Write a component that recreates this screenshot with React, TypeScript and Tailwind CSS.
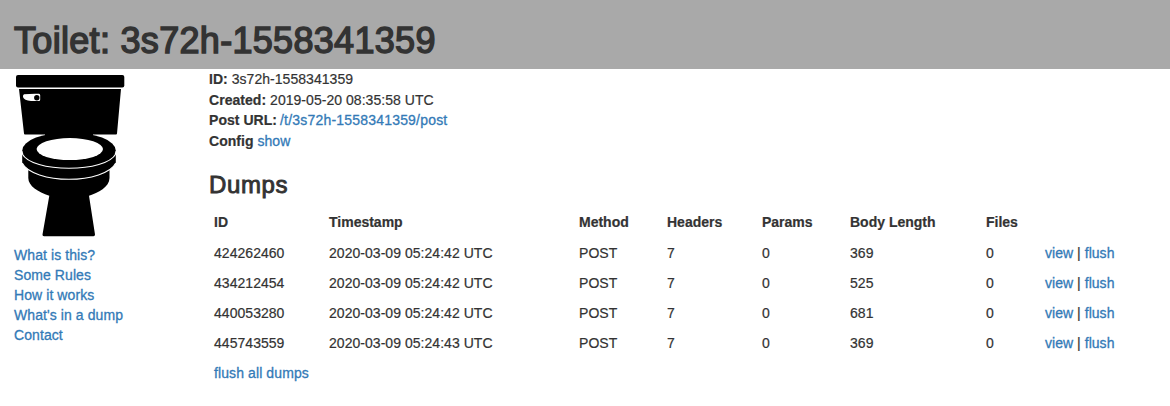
const rows = [
  ["424262460", "2020-03-09 05:24:42 UTC", "POST", "7", "0", "369", "0"],
  ["434212454", "2020-03-09 05:24:42 UTC", "POST", "7", "0", "525", "0"],
  ["440053280", "2020-03-09 05:24:42 UTC", "POST", "7", "0", "681", "0"],
  ["445743559", "2020-03-09 05:24:43 UTC", "POST", "7", "0", "369", "0"],
];
const heads = ["ID", "Timestamp", "Method", "Headers", "Params", "Body Length", "Files"];
const links = ["What is this?", "Some Rules", "How it works", "What's in a dump", "Contact"];
const grid = "grid grid-cols-[115px_250px_88px_95px_88px_136px_59px_120px] pl-[5px]";
const link = "text-[#337ab7] [-webkit-text-stroke:0.3px_#337ab7]";

function Toilet() {
  return (
    <svg width="112" height="164" viewBox="14 74 112 164" className="block">
      {/* lid and tank */}
      <rect x="16" y="75" width="108.3" height="12.4" rx="2" />
      <path d="M19 89H121L117 133.5Q117 134.4 116 134.4H25Q24 134.4 24 133.5Z" />
      <path d="M45 134H93V142H45Z" />
      {/* flush handle */}
      <path d="M24 94.2L35 93.8H39Q40.2 94 40.2 95.5V99.5Q40.2 101 39 101H31Q24 100.5 23 97Q22.8 94.8 24 94.2Z" fill="white" />
      <circle cx="36.8" cy="97.7" r="2.7" />
      {/* base and bowl */}
      <path d="M28.3 168H109.5V178C109.5 187 98 193 89 195.7L95 234.5Q95 236.2 93.5 236.2H44Q42.3 236.2 42.5 234.5L49.3 195.7C38 192 28.3 186 28.3 178Z" />
      {/* lower rim */}
      <path d="M22.2 154V163C27 173 48 179.3 69 179.3S111 173 115.8 163V154Z" />
      <path d="M22.2 163C27 173 48 179.3 69 179.3S111 173 115.8 163" fill="none" stroke="white" strokeWidth="1.1" />
      {/* seat */}
      <ellipse cx="69" cy="150.3" rx="46.7" ry="18" />
      <path d="M22.3 154C27 163 47 168.3 69 168.3S111 163 115.7 154" fill="none" stroke="white" strokeWidth="1.1" />
      <ellipse cx="69.8" cy="149.1" rx="33.2" ry="11" fill="white" />
    </svg>
  );
}

export default function App() {
  return (
    <div className="h-[406px] overflow-hidden bg-white font-['Liberation_Sans',Arial,sans-serif] text-sm leading-5 tracking-[0.04px] text-[#333] [-webkit-text-stroke:0.2px_#333]">
      <header className="h-[69px] bg-[#a9a9a9] pl-[14px] pt-[21px]">
        <h1 className="text-[36px] font-normal leading-10 tracking-[0.31px] [-webkit-text-stroke:1.5px_#333]">Toilet: 3s72h-1558341359</h1>
      </header>
      <div className="flex">
        <nav className="w-[209px] pl-[14px] pt-[5px]">
          <Toilet />
          <ul className="pt-[7px] tracking-[0.08px]">{links.map((l) => <li key={l}><a className={link}>{l}</a></li>)}</ul>
        </nav>
        <main>
          <div className="leading-[20.7px]">
            <p><b>ID:</b> 3s72h-1558341359</p>
            <p><b>Created:</b> 2019-05-20 08:35:58 UTC</p>
            <p><b>Post URL:</b> <a className={link + " -ml-px tracking-[0.2px]"}>/t/3s72h-1558341359/post</a></p>
            <p><b>Config</b> <a className={link}>show</a></p>
          </div>
          <h2 className="mt-5 text-2xl leading-[26px] tracking-[0.6px] [-webkit-text-stroke:0.9px_#333]">Dumps</h2>
          <div className="pt-[9px] leading-[30px]">
            <div className={grid + " mb-px tracking-normal"}>{heads.map((h) => <b key={h}>{h}</b>)}</div>
            {rows.map((r) => (
              <div key={r[0]} className={grid}>
                {r.map((c, i) => <span key={i}>{c}</span>)}
                <span><a className={link}>view</a> | <a className={link}>flush</a></span>
              </div>
            ))}
            <a className={link + " ml-[5px] tracking-[0.1px]"}>flush all dumps</a>
          </div>
        </main>
      </div>
    </div>
  );
}
